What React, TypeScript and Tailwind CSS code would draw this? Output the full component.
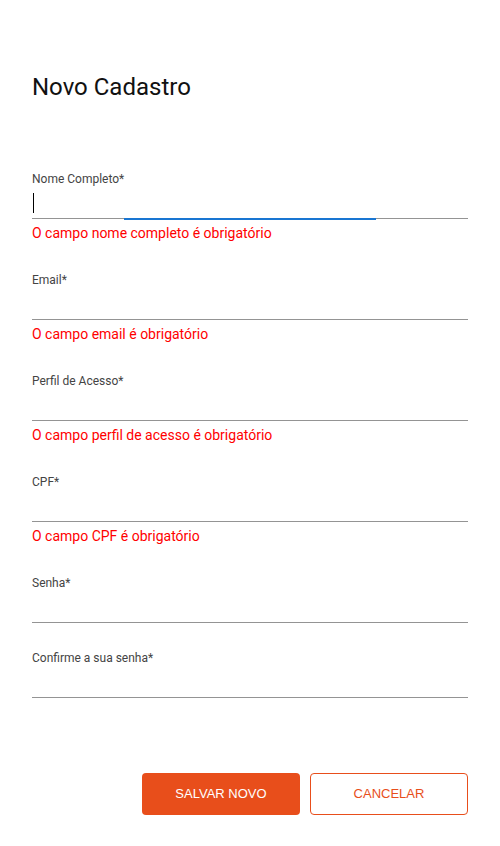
import React from "react";

type FieldProps = {
  label: string;
  error?: string;
  focused?: boolean;
};

function Field({ label, error, focused }: FieldProps) {
  return (
    <div className="flex flex-col mb-[27px]">
      <label className="text-[12px] leading-4 text-[#444]" style={{ fontFamily: "Roboto, 'Liberation Sans', sans-serif" }}>
        {label}
      </label>
      <div className="relative h-8 flex items-start border-b border-[#949494]">
        {focused && <div className="mt-[6px] ml-[1px] w-px h-[20px] bg-black" />}
        {focused && (
          <div className="absolute left-[92px] right-[92px] bottom-[-2px] h-[2px] bg-[#1976d2]" />
        )}
      </div>
      {error && (
        <div className="mt-1 mb-0.5 h-5 text-[14px] leading-5 text-[#ff0000]" style={{ fontFamily: "Roboto, 'Liberation Sans', sans-serif" }}>
          {error}
        </div>
      )}
    </div>
  );
}

export default function App() {
  return (
    <div className="w-[500px] min-h-[846px] bg-white px-8 pt-[71px]" style={{ fontFamily: "Roboto, 'Liberation Sans', sans-serif" }}>
      <h1 className="text-[24px] leading-8 font-normal text-[#111]">Novo Cadastro</h1>
      <div className="mt-[68px] flex flex-col">
        <Field label="Nome Completo*" error="O campo nome completo é obrigatório" focused />
        <Field label="Email*" error="O campo email é obrigatório" />
        <Field label="Perfil de Acesso*" error="O campo perfil de acesso é obrigatório" />
        <Field label="CPF*" error="O campo CPF é obrigatório" />
        <Field label="Senha*" />
        <Field label="Confirme a sua senha*" />
      </div>
      <div className="mt-[48px] flex justify-end gap-[10px]" style={{ fontFamily: "'Liberation Sans', Arial, sans-serif" }}>
        <button className="w-[158px] h-[42px] rounded-[4px] bg-[#e84e1b] text-white text-[13px]">
          SALVAR NOVO
        </button>
        <button className="w-[158px] h-[42px] rounded-[4px] border border-[#e84e1b] bg-white text-[#e84e1b] text-[13px]">
          CANCELAR
        </button>
      </div>
    </div>
  );
}
